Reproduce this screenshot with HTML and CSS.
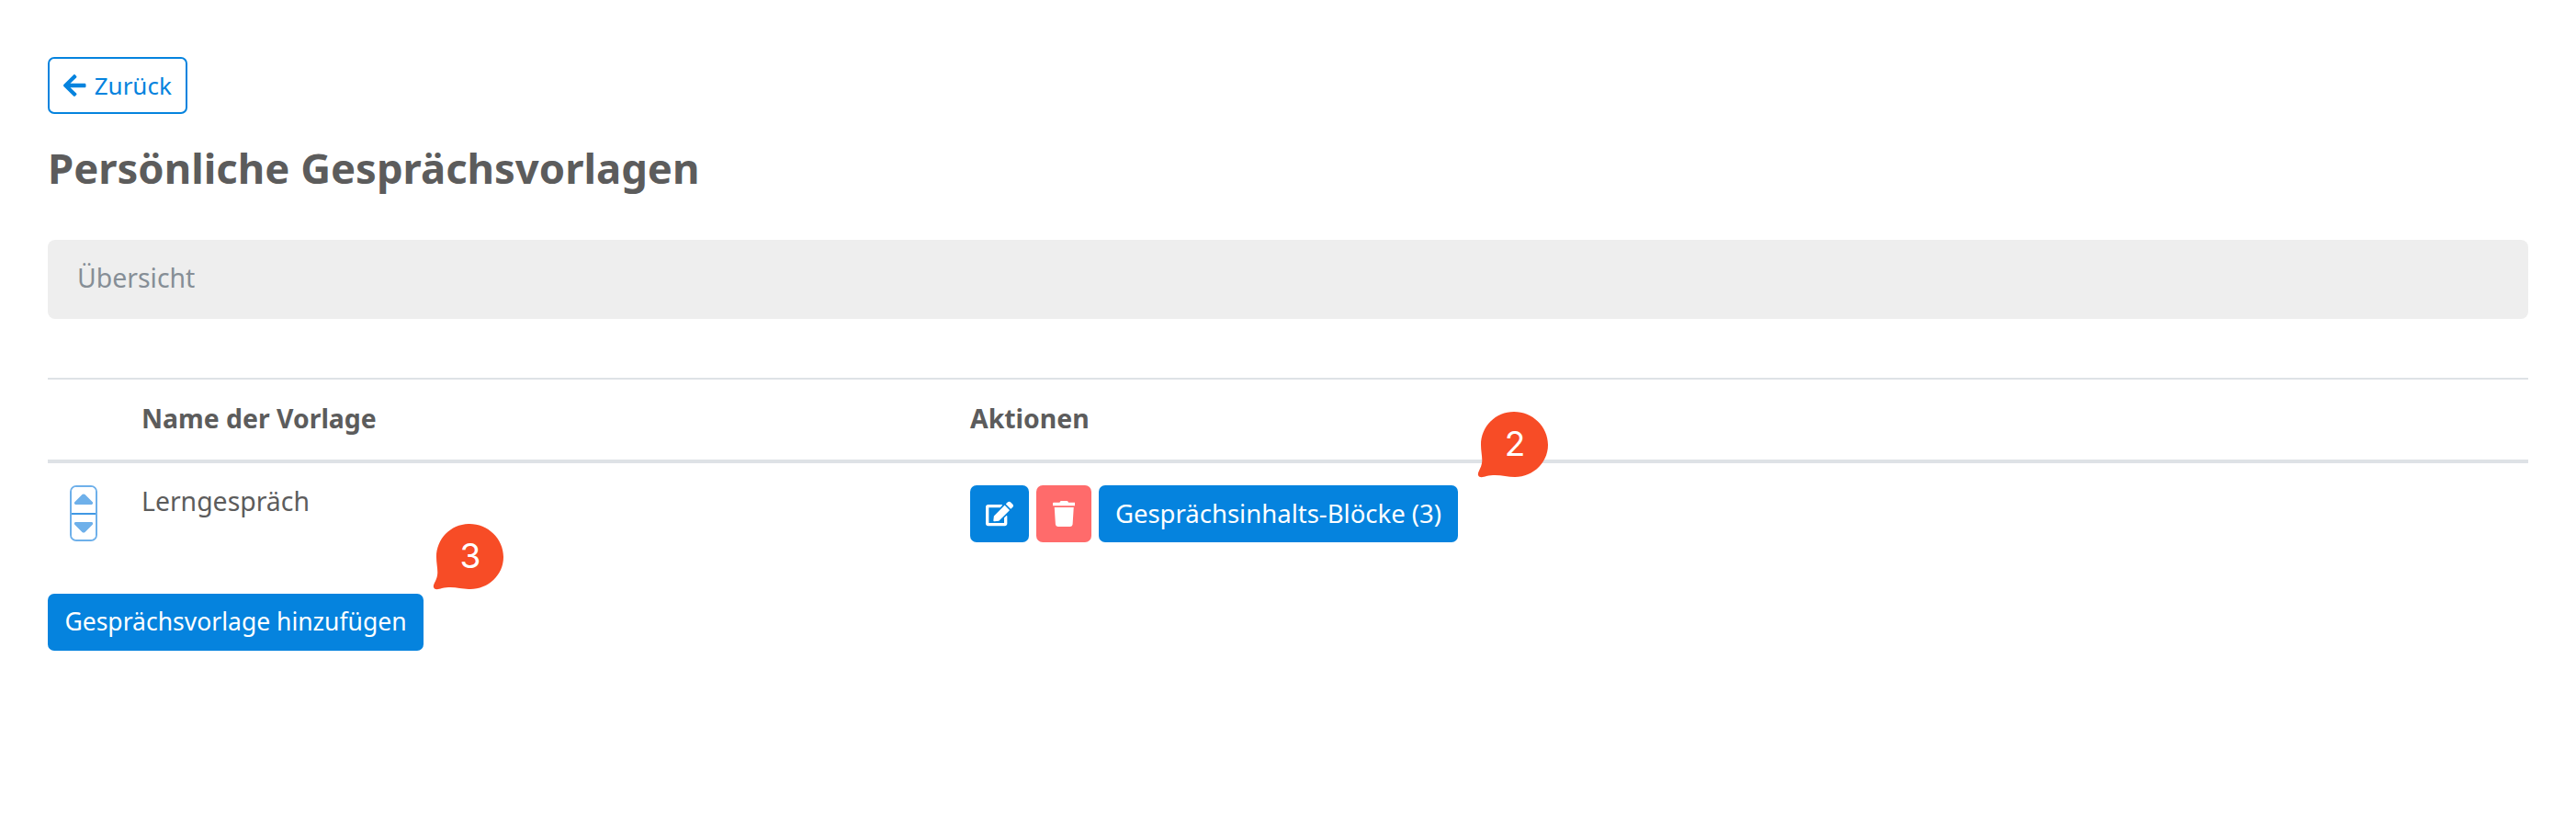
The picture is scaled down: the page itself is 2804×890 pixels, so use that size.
FILE: index.html
```html
<!DOCTYPE html>
<html lang="de">
<head>
<meta charset="utf-8">
<title>Persönliche Gesprächsvorlagen</title>
<link rel="stylesheet" href="styles.css">
</head>
<body>
<main class="page">
  <a class="btn btn-outline" href="#">
    <svg class="icon" viewBox="0 0 448 512"><path d="M257.5 445.1l-22.2 22.2c-9.4 9.4-24.6 9.4-33.9 0L7 273c-9.4-9.4-9.4-24.6 0-33.9L201.4 44.7c9.4-9.4 24.6-9.4 33.9 0l22.2 22.2c9.5 9.5 9.3 25-.4 34.3L136.6 216H424c13.3 0 24 10.7 24 24v32c0 13.3-10.7 24-24 24H136.6l120.5 114.8c9.8 9.3 10 24.8.4 34.3z"/></svg>
    <span>Zurück</span>
  </a>
  <h1 class="title">Persönliche Gesprächsvorlagen</h1>
  <nav class="crumb">Übersicht</nav>
  <table class="table">
    <thead>
      <tr>
        <th class="col-sort"></th>
        <th class="col-name">Name der Vorlage</th>
        <th>Aktionen</th>
      </tr>
    </thead>
    <tbody>
      <tr>
        <td class="col-sort">
          <div class="sorter">
            <button class="sort-btn" type="button"><svg viewBox="0 0 20 12"><path d="M8.6 1 1 8.6C.1 9.6.8 11 2 11h16c1.200 0 1.900-1.400 1-2.400L11.400 1c-.8-.8-2-.8-2.800 0z"/></svg></button>
            <button class="sort-btn" type="button"><svg viewBox="0 0 20 12"><path d="M8.600 11 1 3.400C.1 2.400.8 1 2 1h16c1.200 0 1.900 1.400 1 2.400L11.400 11c-.8.8-2 .8-2.800 0z"/></svg></button>
          </div>
        </td>
        <td class="col-name">Lerngespräch</td>
        <td>
          <div class="actions">
            <button class="btn btn-blue btn-icon" type="button"><svg class="icon icon-edit" viewBox="0 0 576 512"><path d="M402.6 83.2l90.2 90.2c3.800 3.800 3.800 10 0 13.800L274.400 405.600l-92.800 10.300c-12.400 1.400-22.900-9.100-21.500-21.500l10.300-92.800L388.800 83.200c3.800-3.800 10-3.800 13.800 0zm162-22.900l-48.800-48.800c-15.200-15.200-39.900-15.200-55.200 0l-35.400 35.400c-3.800 3.800-3.800 10 0 13.800l90.200 90.200c3.800 3.800 10 3.800 13.800 0l35.400-35.400c15.200-15.300 15.200-40 0-55.200zM384 346.200V448H64V128h229.800c3.200 0 6.200-1.300 8.500-3.500l40-40c7.600-7.600 2.200-20.500-8.500-20.500H48C21.500 64 0 85.500 0 112v352c0 26.500 21.500 48 48 48h352c26.500 0 48-21.500 48-48V306.200c0-10.700-12.900-16-20.500-8.500l-40 40c-2.200 2.300-3.500 5.300-3.500 8.500z"/></svg></button>
            <button class="btn btn-red btn-icon-narrow" type="button"><svg class="icon icon-trash" viewBox="0 0 448 512"><path d="M432 32H312l-9.400-18.700A24 24 0 0 0 281.100 0H166.800a23.720 23.720 0 0 0-21.400 13.300L136 32H16A16 16 0 0 0 0 48v32a16 16 0 0 0 16 16h416a16 16 0 0 0 16-16V48a16 16 0 0 0-16-16zM53.200 467a48 48 0 0 0 47.900 45h245.800a48 48 0 0 0 47.900-45L416 128H32z"/></svg></button>
            <div class="pinned">
              <button class="btn btn-blue btn-blocks" type="button">Gesprächsinhalts-Blöcke (3)</button>
              <div class="pin pin-two">
                <svg viewBox="0 0 78 72"><path d="M40 0C60 0 77 16 77 36C77 56 60 71 41 71C31 71 22 67 10 70C6 71.500 2 72 1 69C0 66 4 62 5 56C6 50 4 44 4 36C4 16 20 0 40 0Z"/></svg>
                <span class="pin-label">2</span>
              </div>
            </div>
          </div>
        </td>
      </tr>
    </tbody>
  </table>
  <div class="pinned pinned-add">
    <button class="btn btn-blue btn-add" type="button">Gesprächsvorlage hinzufügen</button>
    <div class="pin pin-three">
      <svg viewBox="0 0 78 72"><path d="M40 0C60 0 77 16 77 36C77 56 60 71 41 71C31 71 22 67 10 70C6 71.500 2 72 1 69C0 66 4 62 5 56C6 50 4 44 4 36C4 16 20 0 40 0Z"/></svg>
      <span class="pin-label">3</span>
    </div>
  </div>
</main>
</body>
</html>
```
FILE: styles.css
```css
* { box-sizing: border-box; }
html, body { margin: 0; padding: 0; background: #fff; }
body {
  font-family: "Noto Sans", "Liberation Sans", sans-serif;
  font-size: 28.400px;
  line-height: 1.5;
  color: #5c5c5c;
}
.page { padding: 62px 52px 0; }
.btn {
  display: inline-flex;
  align-items: center;
  justify-content: center;
  height: 62px;
  padding: 0;
  border: 2px solid transparent;
  border-radius: 7px;
  font: inherit;
  font-size: 27px;
  text-decoration: none;
  cursor: pointer;
  white-space: nowrap;
}
.btn-blue { background: #0583de; color: #fff; }
.btn-red { background: #ff6b6b; color: #fff; }
.btn-outline {
  gap: 9px;
  width: 152px;
  height: 62px;
  font-size: 26px;
  border-color: #0583de;
  color: #0583de;
  background: #fff;
}
.btn-icon { width: 64px; }
.btn-icon-narrow { width: 60px; }
.btn-blocks { width: 391px; font-size: 27.500px; }
.btn-add { width: 409px; font-size: 26.500px; }
.icon { display: block; width: 24.500px; height: 28px; fill: currentColor; }
.icon-edit { width: 30px; height: 28px; }
.title {
  margin: 27px 0 0;
  font-size: 45.400px;
  line-height: 62px;
  font-weight: 700;
}
.crumb {
  margin-top: 48px;
  height: 86px;
  padding: 0 32px 3px;
  display: flex;
  align-items: center;
  background: #eee;
  border-radius: 8px;
  color: #868e96;
}
.table {
  width: 100%;
  margin-top: 64px;
  border-collapse: collapse;
  table-layout: fixed;
}
.table th {
  height: 90px;
  padding: 0 0 2px;
  text-align: left;
  font-weight: 700;
  border-top: 2px solid #dee2e6;
  border-bottom: 4px solid #dee2e6;
}
.table td { padding: 24px 0; vertical-align: top; line-height: 34px; }
.col-sort { width: 102px; }
.col-name { width: 902px; }
.sorter {
  display: flex;
  flex-direction: column;
  width: 30px;
  height: 61px;
  margin-left: 24px;
  border: 2.500px solid #6eb0ea;
  border-radius: 7px;
  overflow: hidden;
}
.sort-btn {
  flex: 1;
  display: flex;
  align-items: center;
  justify-content: center;
  padding: 0;
  border: 0;
  background: #fff;
}
.sort-btn + .sort-btn { border-top: 2.500px solid #3f98e4; }
.sort-btn svg { display: block; width: 22px; height: 13px; fill: #6eb0ea; }
.actions { display: flex; gap: 8px; }
.pinned { position: relative; display: inline-flex; }
.pinned-add { display: flex; width: max-content; margin-top: 32px; }
.pin { position: absolute; width: 78px; height: 72px; z-index: 1; }
.pin svg { display: block; width: 78px; height: 72px; fill: #f74c26; }
.pin-two { left: calc(100% + 21px); bottom: calc(100% + 8px); }
.pin-three { left: calc(100% + 10px); bottom: calc(100% + 4px); }
.pin-label {
  position: absolute;
  left: 4px;
  right: 0;
  top: -2px;
  bottom: 2px;
  display: flex;
  align-items: center;
  justify-content: center;
  color: #fff;
  font-family: "Inter", sans-serif;
  font-size: 37px;
  line-height: 1;
}
```
